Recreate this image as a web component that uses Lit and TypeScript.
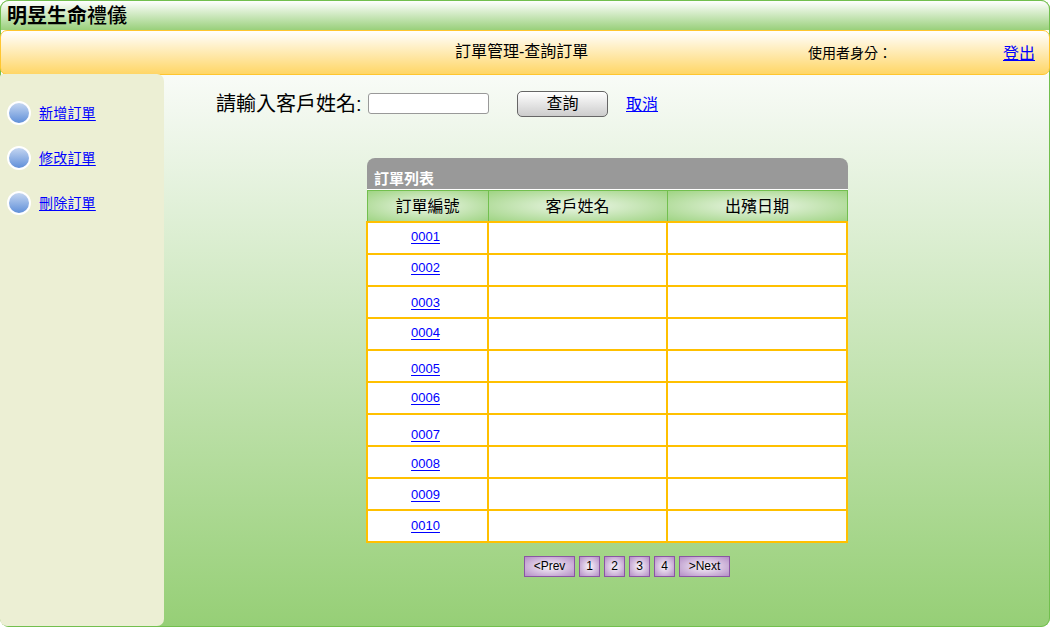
import { LitElement, html, css } from "lit";
import { customElement } from "lit/decorators.js";

interface Order {
  id: string;
  offset: number;
}

const MENU = ["新增訂單", "修改訂單", "刪除訂單"];

const ORDERS: Order[] = [
  { id: "0001", offset: 4 },
  { id: "0002", offset: 3 },
  { id: "0003", offset: 6 },
  { id: "0004", offset: 4 },
  { id: "0005", offset: 8 },
  { id: "0006", offset: 5 },
  { id: "0007", offset: 10 },
  { id: "0008", offset: 7 },
  { id: "0009", offset: 6 },
  { id: "0010", offset: 5 },
];

const COLUMNS = ["訂單編號", "客戶姓名", "出殯日期"];
const PAGES = ["1", "2", "3", "4"];

@customElement("order-sidebar")
export class OrderSidebar extends LitElement {
  static styles = css`
    :host {
      display: block;
      box-sizing: border-box;
      padding: 27px 0 0 7px;
      background: #ecefd4;
      border-radius: 3px 7px 7px 7px;
    }
    .menu {
      display: flex;
      flex-direction: column;
      gap: 21px;
    }
    .entry {
      display: flex;
      align-items: center;
      gap: 8px;
      height: 24px;
    }
    .dot {
      display: block;
      width: 24px;
      height: 24px;
    }
    .link {
      color: #0000ff;
      font-size: 14px;
      line-height: 18px;
      letter-spacing: 0.2px;
      text-decoration: underline;
      text-decoration-thickness: 1px;
      text-decoration-skip-ink: none;
      text-underline-offset: 2px;
    }
  `;

  render() {
    return html`<nav class="menu">
      ${MENU.map(
        (label) => html`<div class="entry">
          <svg class="dot" viewBox="0 0 24 24">
            <defs>
              <linearGradient id="ball" x1="0" y1="0" x2="0" y2="1">
                <stop offset="0" stop-color="#c9d9f2" />
                <stop offset="1" stop-color="#5b8cd8" />
              </linearGradient>
            </defs>
            <circle cx="12" cy="12" r="11" fill="url(#ball)" stroke="#fff" stroke-width="2" />
          </svg>
          <a class="link">${label}</a>
        </div>`
      )}
    </nav>`;
  }
}

@customElement("order-table")
export class OrderTable extends LitElement {
  static styles = css`
    :host {
      display: block;
      width: 482px;
    }
    .caption {
      box-sizing: border-box;
      height: 31px;
      margin-left: 1px;
      padding: 11px 0 0 7px;
      background: #999;
      border-radius: 8px 8px 0 0;
      color: #fff;
      font-size: 15px;
      font-weight: bold;
      line-height: 20px;
    }
    .heads {
      display: grid;
      grid-template-columns: 121px 179px 181px;
      box-sizing: border-box;
      height: 32px;
      margin-left: 1px;
      border-top: 1px solid #fff;
    }
    .head {
      box-sizing: border-box;
      padding-top: 2px;
      border-top: 1px solid #72bf4e;
      border-left: 1px solid #72bf4e;
      background: radial-gradient(farthest-corner at 50% 50%, #edf6e8 0%, #9fd483 100%);
      font-size: 16px;
      line-height: 28px;
      text-align: center;
      text-indent: -1px;
    }
    .head:last-child {
      border-right: 1px solid #72bf4e;
    }
    .rows {
      display: grid;
      grid-template-columns: 119px 177px 178px;
      grid-auto-rows: 30px;
      gap: 2px;
      padding: 2px;
      background: #ffc000;
    }
    .cell {
      box-sizing: border-box;
      background: #fff;
      text-align: center;
    }
    .number {
      display: inline-block;
      margin-right: 4px;
      color: #0000ff;
      font-size: 13px;
      line-height: 15px;
      text-decoration: underline;
      text-decoration-thickness: 1px;
      text-decoration-skip-ink: none;
      text-underline-offset: 2px;
    }
  `;

  render() {
    return html`
      <div class="caption">訂單列表</div>
      <div class="heads">${COLUMNS.map((c) => html`<div class="head">${c}</div>`)}</div>
      <div class="rows">
        ${ORDERS.map(
          (o) => html`<div class="cell" style="padding-top:${o.offset}px"><a class="number">${o.id}</a></div>
            <div class="cell"></div>
            <div class="cell"></div>`
        )}
      </div>
    `;
  }
}

@customElement("app-root")
export class AppRoot extends LitElement {
  static styles = css`
    :host {
      display: block;
      width: 1050px;
      height: 627px;
      overflow: hidden;
      background: #fff;
      color: #000;
      font-family: "Liberation Sans", "Noto Sans CJK TC", sans-serif;
    }
    .window {
      display: flex;
      flex-direction: column;
      box-sizing: border-box;
      height: 627px;
      border-radius: 9px;
      background: linear-gradient(#fff 40px, #f2f8ef 110px, #96cf76 627px);
      box-shadow: inset 0 0 0 1px #72bf4e;
    }
    .brand {
      box-sizing: border-box;
      flex: 0 0 30px;
      padding: 1px 0 0 6px;
      border: 1px solid #72bf4e;
      border-bottom: 0;
      border-radius: 9px 9px 0 0;
      background: linear-gradient(#fff, #99d07b);
      font-size: 20px;
      font-weight: bold;
      line-height: 28px;
    }
    .light {
      font-weight: 500;
    }
    .bar {
      display: grid;
      grid-template-columns: 454px 353px 195px 1fr;
      box-sizing: border-box;
      flex: 0 0 45px;
      margin-bottom: -1px;
      border: 1px solid #ffc62f;
      border-radius: 7px;
      background: linear-gradient(#fff, #ffd666);
      line-height: 40px;
    }
    .heading {
      grid-column: 2;
      padding-top: 1px;
      font-size: 16px;
    }
    .user {
      padding-top: 2px;
      font-size: 14px;
    }
    .link {
      color: #0000ff;
      font-size: 16px;
      text-decoration: underline;
      text-decoration-thickness: 1px;
      text-decoration-skip-ink: none;
      text-underline-offset: 1px;
    }
    .logout {
      padding-top: 3px;
    }
    .body {
      display: grid;
      grid-template-columns: 164px 1fr;
      flex: 1;
      padding-bottom: 1px;
    }
    .search {
      display: flex;
      align-items: center;
      height: 28px;
      padding: 16px 0 0 52px;
    }
    .label {
      width: 152px;
      font-size: 20px;
      line-height: 28px;
    }
    .field {
      box-sizing: border-box;
      width: 121px;
      height: 21px;
      margin: 0 28px 1px 0;
      padding: 0 4px;
      border: 1px solid #999;
      border-radius: 3px;
      background: #fff;
    }
    .submit {
      box-sizing: border-box;
      width: 91px;
      height: 26px;
      margin: 0 18px 0 0;
      padding: 0;
      border: 1px solid #666;
      border-radius: 5px;
      background: linear-gradient(#fff, #ccc);
      color: #000;
      font: 16px/22px "Liberation Sans", "Noto Sans CJK TC", sans-serif;
    }
    .cancel {
      margin-bottom: 3px;
    }
    .list {
      display: block;
      margin: 40px 0 0 202px;
    }
    .pager {
      display: flex;
      gap: 4px;
      margin: 13px 0 0 360px;
    }
    .page {
      box-sizing: border-box;
      width: 21px;
      height: 21px;
      border: 1px solid #8a56a3;
      background: radial-gradient(farthest-corner at 50% 50%, #faf6fb, #b48ec6);
      font-size: 12px;
      line-height: 19px;
      text-align: center;
    }
    .wide {
      width: 51px;
    }
  `;

  render() {
    return html`
      <div class="window">
        <header class="brand">明昱生命<span class="light">禮儀</span></header>
        <div class="bar">
          <div class="heading">訂單管理-查詢訂單</div>
          <div class="user">使用者身分：</div>
          <div class="logout"><a class="link">登出</a></div>
        </div>
        <div class="body">
          <order-sidebar></order-sidebar>
          <main>
            <div class="search">
              <label class="label">請輸入客戶姓名:</label>
              <input class="field" type="text" />
              <button class="submit">查詢</button>
              <a class="link cancel">取消</a>
            </div>
            <order-table class="list"></order-table>
            <div class="pager">
              <div class="page wide">&lt;Prev</div>
              ${PAGES.map((p) => html`<div class="page">${p}</div>`)}
              <div class="page wide">&gt;Next</div>
            </div>
          </main>
        </div>
      </div>
    `;
  }
}
